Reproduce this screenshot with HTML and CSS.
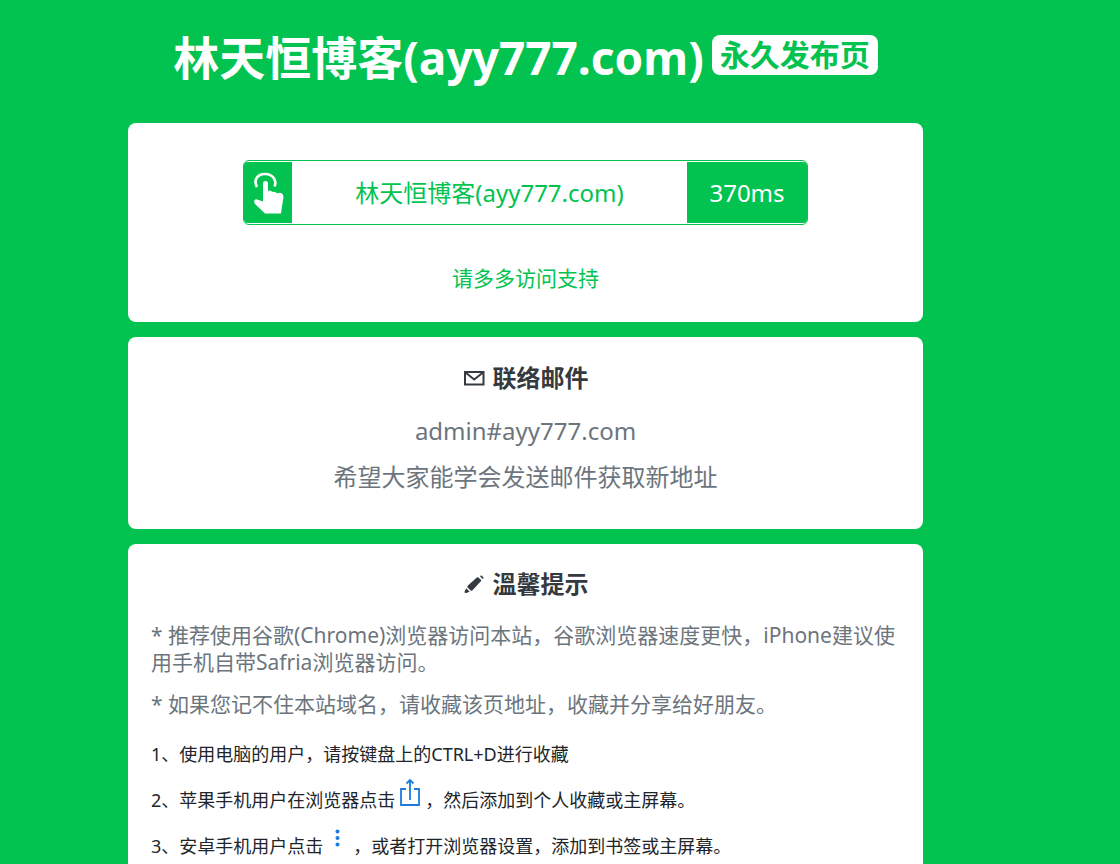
FILE: index.html
```html
<!DOCTYPE html>
<html lang="zh-CN">
<head>
<meta charset="utf-8">
<meta name="viewport" content="width=device-width, initial-scale=1">
<title>林天恒博客(ayy777.com) 永久发布页</title>
<link rel="stylesheet" href="styles.css">
</head>
<body>
<main class="page">
  <h1 class="page-title"><span>林天恒博客(ayy777.com)</span><span class="badge">永久发布页</span></h1>

  <section class="card card-link">
    <a class="site-link" href="#">
      <span class="site-icon">
        <svg width="32" height="44" viewBox="0 0 32 44" fill="none" aria-hidden="true">
          <path d="M5 16C1.500 10 4.500 3 13 3S25 10 22.500 15.500" stroke="#fff" stroke-width="2.600"/>
          <path d="M11 12.500a2.500 2.500 0 0 1 5 0V20q2.500-1.500 4.500 1 2.500-1 4.500 1.200 3-1 4.800.3 1.800 1 1.600 4L29 42.500H13L3.500 33.500q-2.200-2.500-.9-4.200 1-1.600 3.200-.5L11 30.500z" fill="#fff"/>
        </svg>
      </span>
      <span class="site-name">林天恒博客(ayy777.com)</span>
      <span class="site-ping">370ms</span>
    </a>
    <p class="support">请多多访问支持</p>
  </section>

  <section class="card card-mail">
    <h2 class="card-title">
      <svg width="22" height="22" viewBox="0 0 22 22" fill="none" stroke="currentColor" stroke-width="2" aria-hidden="true"><path d="M2 5h18.500v12.500H2zM2.500 5.500 11.200 12.500l8.800-7"/></svg>
      联络邮件
    </h2>
    <p class="mail-line">admin#ayy777.com</p>
    <p class="mail-line">希望大家能学会发送邮件获取新地址</p>
  </section>

  <section class="card card-tips">
    <h2 class="card-title">
      <svg width="22" height="22" viewBox="0 0 22 22" fill="currentColor" aria-hidden="true"><path d="m15.500 4.500 3 3L9.300 17.500q-.9.700-1.700 0L4.600 14.500q-.6-.9.100-1.700L13.800 4.500q.8-.7 1.700 0zM17 3.300l1.200-1.100 2.600 2.600-1.200 1.200zM3.200 15.200 6.700 18.700 3.200 20q-2 .4-1.600-1.500z"/></svg>
      溫馨提示
    </h2>
    <p class="tip">* 推荐使用谷歌(Chrome)浏览器访问本站，谷歌浏览器速度更快，iPhone建议使用手机自带Safria浏览器访问。</p>
    <p class="tip">* 如果您记不住本站域名，请收藏该页地址，收藏并分享给好朋友。</p>
    <div class="steps">
      <p class="step">1、使用电脑的用户，请按键盘上的CTRL+D进行收藏</p>
      <p class="step">2、苹果手机用户在浏览器点击<svg class="step-icon" width="30" height="30" viewBox="0 0 30 30" fill="none" stroke="#1c7cdc" stroke-width="1.800" aria-label="分享"><path d="M11 11H6v16h18V11h-5M15 22V2M11.500 5.500 15 2l3.500 3.500"/></svg>，然后添加到个人收藏或主屏幕。</p>
      <p class="step">3、安卓手机用户点击<svg class="step-icon" width="30" height="30" viewBox="0 0 30 30" fill="#1c7cdc" aria-label="菜单"><circle cx="14.500" cy="7.500" r="2"/><circle cx="14.500" cy="14" r="2"/><circle cx="14.500" cy="20.500" r="2"/></svg>，或者打开浏览器设置，添加到书签或主屏幕。</p>
    </div>
  </section>
</main>
</body>
</html>
```
FILE: styles.css
```css
* {
  box-sizing: border-box;
}

body {
  margin: 0;
  background: #02c350;
  color: #212529;
  font-family: "Noto Sans", "Noto Sans CJK SC", sans-serif;
}

h1, h2, p {
  margin: 0;
}

.page {
  display: flex;
  flex-direction: column;
  gap: 15px;
  padding: 30px 197px 30px 128px;
}

.page-title {
  display: flex;
  align-items: center;
  justify-content: center;
  gap: 8px;
  margin-bottom: 24px;
  color: #fff;
  font-size: 46px;
  line-height: 54px;
  white-space: nowrap;
}

.badge {
  margin-bottom: 4px;
  padding: 0 8px;
  border-radius: 8px;
  background: #fff;
  color: #02c350;
  font-size: 30px;
  line-height: 40px;
}

.card {
  border-radius: 8px;
  background: #fff;
}

.card-link {
  padding: 37px 23px 28px;
  text-align: center;
}

.site-link {
  display: flex;
  width: 100%;
  max-width: 565px;
  margin: 0 auto 37px;
  padding: 1px 0;
  border: 1px solid #02c350;
  border-radius: 6px;
  color: #02c350;
  font-size: 24px;
  line-height: 61px;
  text-decoration: none;
}

.site-icon {
  display: flex;
  align-items: center;
  justify-content: center;
  width: 48px;
  border-radius: 4px 0 0 4px;
  background: #02c350;
}

.site-name {
  flex: 1;
}

.site-ping {
  width: 120px;
  border-radius: 0 4px 4px 0;
  background: #02c350;
  color: #fff;
}

.support {
  color: #02c350;
  font-size: 21px;
  line-height: 32px;
}

.card-title {
  display: flex;
  align-items: center;
  justify-content: center;
  gap: 8px;
  color: #343a40;
  font-size: 24px;
  line-height: 30px;
}

.card-mail {
  padding: 26px 23px 34px;
  text-align: center;
}

.mail-line {
  margin-top: 10px;
  color: #6c757d;
  font-size: 24px;
  line-height: 36px;
}

.card-title + .mail-line {
  margin-top: 20px;
}

.card-tips {
  padding: 25px 23px;
}

.tip {
  margin-top: 15px;
  color: #6c757d;
  font-size: 21px;
  line-height: 27px;
}

.card-title + .tip {
  margin-top: 23px;
}

.steps {
  margin-top: 13px;
}

.step {
  font-size: 18px;
  line-height: 46px;
}

.step-icon {
  vertical-align: -1px;
}
```
